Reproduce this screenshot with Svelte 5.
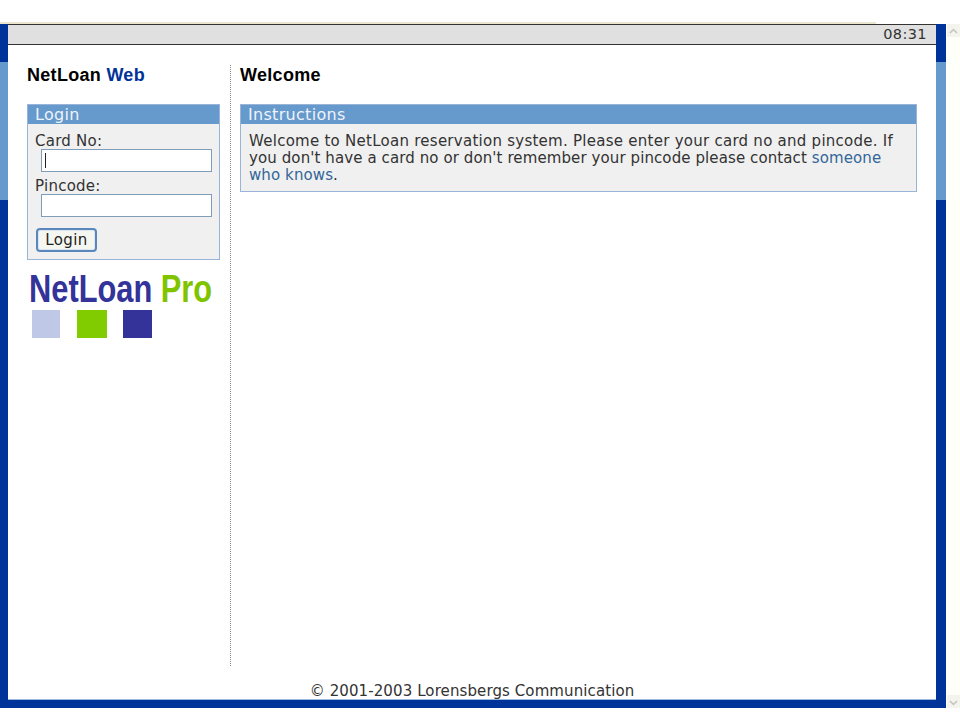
<script lang="ts">
	let cardNo = $state('');
	let pincode = $state('');
</script>

<div class="page">
	<div class="window">
		<div class="topline"></div>
		<div class="frame">
			<div class="shell">
				<div class="rail">
					<div class="rail-light"></div>
				</div>
				<div class="inner">
					<div class="clockbar">08:31</div>
					<div class="content">
						<aside class="side">
							<h1>NetLoan <span class="web">Web</span></h1>
							<section class="panel login">
								<h2>Login</h2>
								<div class="panel-body">
									<label for="card">Card No:</label>
									<input id="card" type="text" class="caret" bind:value={cardNo} />
									<label for="pin">Pincode:</label>
									<input id="pin" type="password" bind:value={pincode} />
									<button type="button">Login</button>
								</div>
							</section>
							<div class="logo">
								<div class="logo-name">NetLoan <span class="pro">Pro</span></div>
								<div class="squares">
									<span class="sq lilac"></span>
									<span class="sq green"></span>
									<span class="sq indigo"></span>
								</div>
							</div>
						</aside>
						<main class="main">
							<h1>Welcome</h1>
							<section class="panel">
								<h2>Instructions</h2>
								<div class="message">
									<div class="wide">Welcome to NetLoan reservation system. Please enter your card no and pincode. If</div>
									<div>you don't have a card no or don't remember your pincode please contact <a href="#someone">someone</a></div>
									<div><a href="#someone">who knows</a>.</div>
								</div>
							</section>
						</main>
					</div>
					<footer>© 2001-2003 Lorensbergs Communication</footer>
				</div>
				<div class="rail">
					<div class="rail-light"></div>
				</div>
			</div>
			<div class="bottom"></div>
		</div>
	</div>
	<div class="scrollbar">
		<div class="arrow">
			<svg viewBox="0 0 13 13" width="13" height="13"><path d="M3 8l3.5-3.5L10 8" fill="none" stroke="#c4c4bc" stroke-width="1.5" /></svg>
		</div>
		<div class="arrow">
			<svg viewBox="0 0 13 13" width="13" height="13"><path d="M3 5l3.5 3.5L10 5" fill="none" stroke="#c4c4bc" stroke-width="1.5" /></svg>
		</div>
	</div>
</div>

<style>
	:global(body) {
		margin: 0;
		background: #fff;
	}

	.page {
		width: 960px;
		height: 720px;
		display: flex;
		overflow: hidden;
		font-family: "DejaVu Sans", Verdana, sans-serif;
		font-size: 15px;
		color: #333;
	}

	.window {
		width: 946px;
		padding-top: 22px;
		box-sizing: border-box;
	}

	.topline {
		width: 876px;
		height: 2px;
		background: #e9e5cf;
	}

	.frame {
		display: flex;
		flex-direction: column;
		height: 684px;
	}

	.shell {
		flex: 1;
		display: flex;
		min-height: 0;
	}

	.rail {
		background: #003399;
		padding-top: 38px;
		box-sizing: border-box;
		width: 8px;
	}

	.rail:last-child {
		width: 10px;
	}

	.rail-light {
		height: 138px;
		background: #6699cc;
	}

	.inner {
		flex: 1;
		display: flex;
		flex-direction: column;
		min-width: 0;
		border-bottom: 1px solid #99bbdd;
	}

	.clockbar {
		height: 19px;
		line-height: 19px;
		background: #e0e0e0;
		border-top: 1px solid #333;
		border-bottom: 1px solid #333;
		text-align: right;
		padding-right: 9px;
		font-size: 14.5px;
		letter-spacing: 0.4px;
	}

	.content {
		flex: 1;
		display: flex;
		padding-top: 20px;
		min-height: 0;
	}

	.side {
		width: 193px;
		margin-left: 19px;
		height: 601px;
		padding-right: 10px;
		border-right: 1px dotted #888;
	}

	h1 {
		margin: 0 0 18px;
		height: 21px;
		line-height: 21px;
		font-family: "Liberation Sans", Arial, sans-serif;
		font-size: 18px;
		font-weight: 700;
		letter-spacing: 0.3px;
		color: #000;
	}

	.web {
		color: #003399;
	}

	.main {
		flex: 1;
		padding: 0 19px 0 9px;
		min-width: 0;
	}

	.panel {
		border: 1px solid #99b3d9;
		background: #f0f0f0;
	}

	h2 {
		margin: 0;
		height: 19px;
		line-height: 20px;
		padding-left: 7px;
		background: #6699cc;
		color: #eef3fa;
		font-size: 16px;
		font-weight: 400;
		letter-spacing: 0.3px;
	}

	.message {
		padding: 9px 8px 7px;
		font-size: 15px;
		line-height: 17px;
		letter-spacing: 0.1px;
		white-space: nowrap;
	}

	.wide {
		letter-spacing: 0.26px;
	}

	a {
		color: #336699;
		text-decoration: none;
	}

	.panel-body {
		display: flex;
		flex-direction: column;
		align-items: flex-start;
		padding: 6px 8px 7px 7px;
	}

	label {
		height: 19px;
		line-height: 23px;
		letter-spacing: 0.25px;
	}

	label[for="pin"] {
		margin-top: 3px;
	}

	input {
		width: 171px;
		height: 23px;
		box-sizing: border-box;
		margin-left: 6px;
		padding: 0 2px;
		border: 1px solid #7f9db9;
		background: #fff;
		outline: none;
	}

	.caret {
		background: linear-gradient(#222, #222) 3px 3px / 1px 15px no-repeat #fff;
	}

	button {
		margin: 11px 0 0 1px;
		width: 61px;
		height: 24px;
		padding: 0;
		border: 2px solid #5b87bd;
		border-radius: 4px;
		background: #f6f6f0;
		box-shadow: inset 0 0 0 1px #dce6f2;
		font-family: inherit;
		font-size: 15px;
		letter-spacing: 0.4px;
		color: #222;
	}

	.logo {
		padding: 11px 0 0 2px;
	}

	.logo-name {
		height: 39px;
		line-height: 36px;
		font-family: "Liberation Sans", Arial, sans-serif;
		font-size: 39px;
		font-weight: 700;
		color: #333399;
		white-space: nowrap;
		transform: scaleX(0.79);
		transform-origin: left center;
	}

	.pro {
		color: #80c400;
	}

	.squares {
		display: flex;
		gap: 17px;
		margin-left: 3px;
	}

	.sq {
		width: 28px;
		height: 28px;
	}

	.lilac {
		background: #c0c8e8;
	}

	.green {
		width: 30px;
		background: #80cc00;
	}

	.indigo {
		width: 29px;
		margin-left: -1px;
		background: #333399;
	}

	footer {
		height: 33px;
		line-height: 50px;
		text-align: center;
		font-size: 15px;
		letter-spacing: 0.1px;
	}

	.bottom {
		height: 8px;
		background: #003399;
	}

	.scrollbar {
		width: 14px;
		height: 684px;
		margin-top: 24px;
		display: flex;
		flex-direction: column;
		justify-content: space-between;
		background: #fffffa;
	}

	.arrow {
		height: 13px;
		width: 13px;
		margin-left: 1px;
		background: #f4f4ee;
	}
</style>
